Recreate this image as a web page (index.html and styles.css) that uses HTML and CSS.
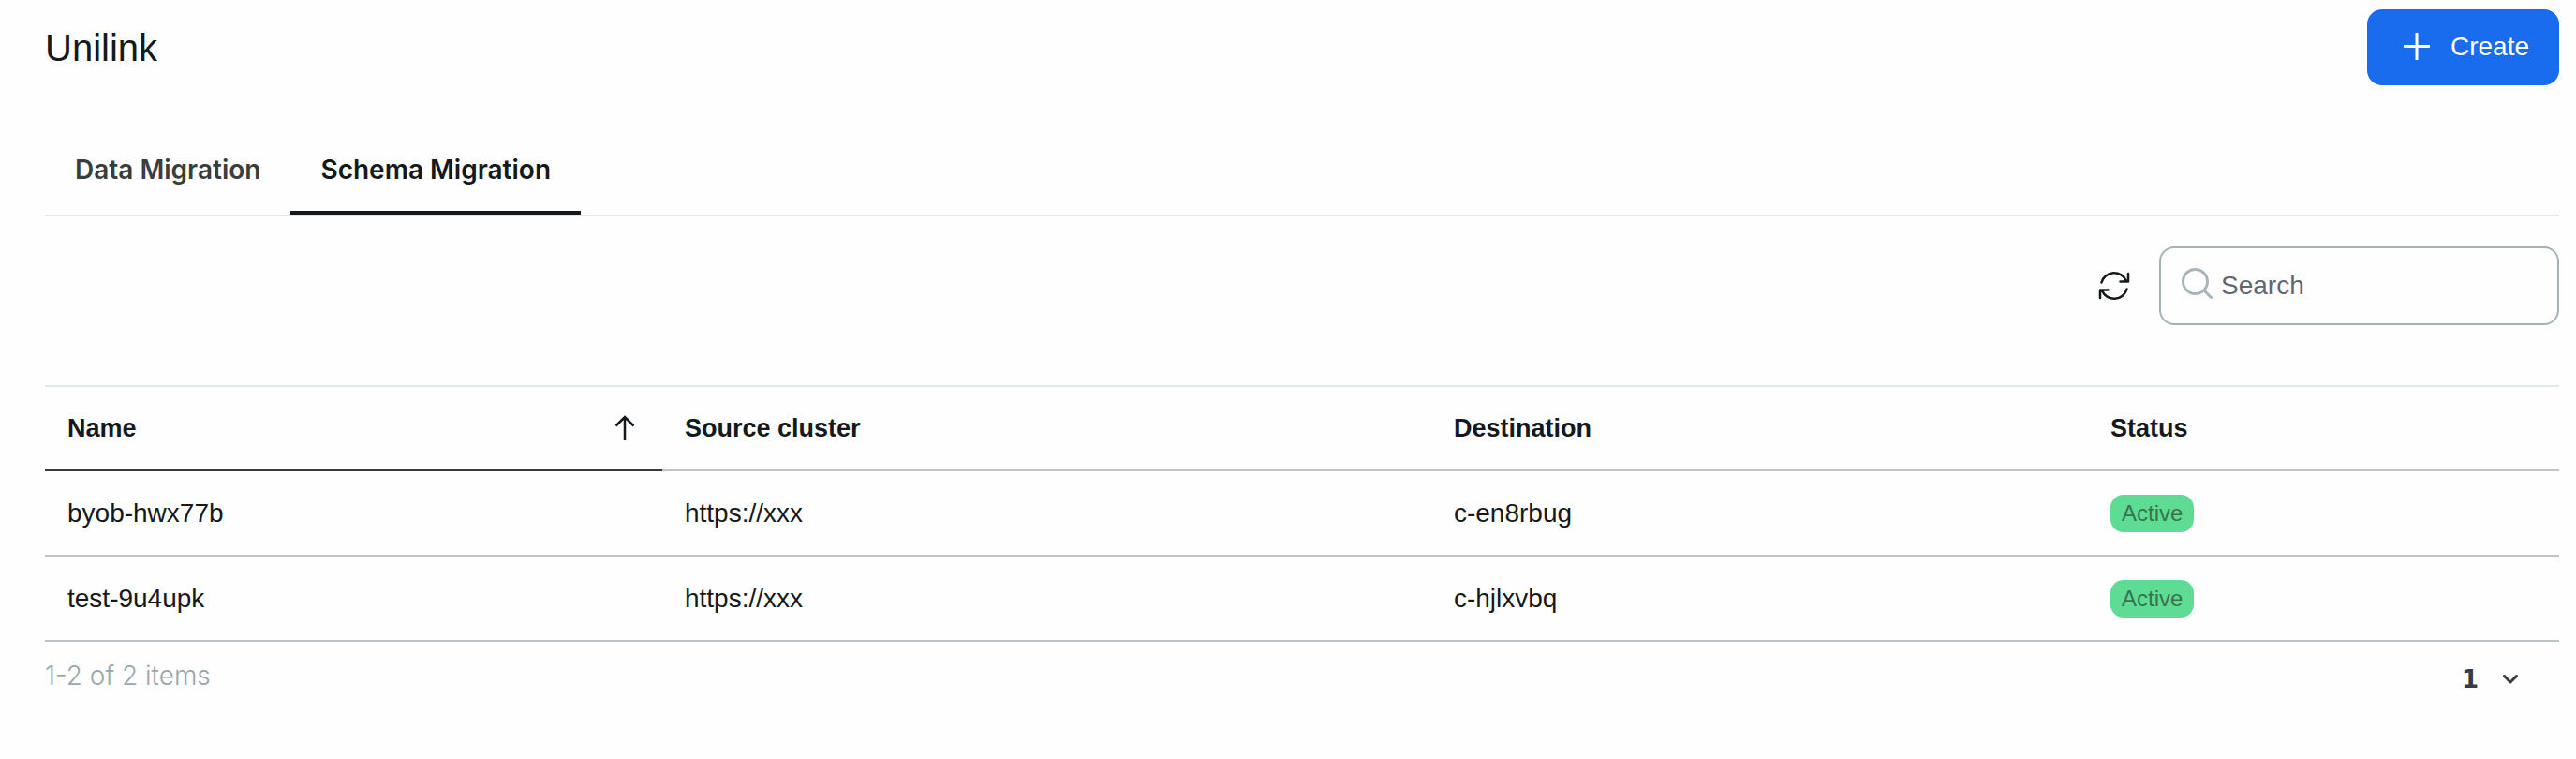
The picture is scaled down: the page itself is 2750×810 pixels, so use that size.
FILE: index.html
```html
<!DOCTYPE html>
<html lang="en">
<head>
<meta charset="utf-8">
<title>Unilink</title>
<link rel="stylesheet" href="styles.css">
</head>
<body>
<main class="page">
  <header class="page-header">
    <h1 class="page-title">Unilink</h1>
    <button class="create-button" type="button">
      <svg class="create-icon" viewBox="0 0 30 30" aria-hidden="true"><path d="M15 0v29M1 14.500h28"/></svg>
      <span>Create</span>
    </button>
  </header>

  <nav class="tabs">
    <a class="tab" href="#data">Data Migration</a>
    <a class="tab tab-active" href="#schema" aria-current="page">Schema Migration</a>
  </nav>

  <div class="toolbar">
    <button class="refresh-button" type="button" aria-label="Refresh">
      <svg class="refresh-icon" viewBox="0 0 34 32" aria-hidden="true"><path d="M3.500 12.500A14 14 0 0 1 30 11M32 3v8.500h-8.500M30.500 19.500A14 14 0 0 1 4 21M2 29v-8.500h8.500"/></svg>
    </button>
    <label class="search">
      <svg class="search-icon" viewBox="0 0 34 34" aria-hidden="true"><circle cx="14.500" cy="14.500" r="13"/><path d="M23.500 23.500l9 9"/></svg>
      <input class="search-input" type="search" placeholder="Search" aria-label="Search">
    </label>
  </div>

  <table class="grid">
    <colgroup><col class="col-name"><col class="col-source"><col class="col-destination"><col></colgroup>
    <thead>
      <tr>
        <th class="sorted" scope="col" aria-sort="ascending">
          <div class="sort-head">
            <span>Name</span>
            <svg class="sort-icon" viewBox="0 0 22 28" aria-hidden="true"><path d="M11 27V2M1.500 11.500L11 2l9.500 9.500"/></svg>
          </div>
        </th>
        <th scope="col">Source cluster</th>
        <th scope="col">Destination</th>
        <th scope="col">Status</th>
      </tr>
    </thead>
    <tbody>
      <tr><td>byob-hwx77b</td><td>https://xxx</td><td>c-en8rbug</td><td><span class="badge">Active</span></td></tr>
      <tr><td>test-9u4upk</td><td>https://xxx</td><td>c-hjlxvbq</td><td><span class="badge">Active</span></td></tr>
    </tbody>
  </table>

  <footer class="pager">
    <span class="pager-count">1-2 of 2 items</span>
    <label class="pager-page">
      <select class="pager-select" aria-label="Page"><option>1</option></select>
      <svg class="pager-icon" viewBox="0 0 16 10" aria-hidden="true"><path d="M1.500 1.500L8 8l6.500-6.500"/></svg>
    </label>
  </footer>
</main>
</body>
</html>
```
FILE: styles.css
```css
* {
  box-sizing: border-box;
}

body {
  margin: 0;
  background: #fefefe;
  color: #16191b;
  font-family: "Liberation Sans", Arial, sans-serif;
  font-size: 28px;
  line-height: 32px;
}

button,
input,
select {
  font: inherit;
}

svg {
  display: block;
  flex: none;
  fill: none;
  stroke: currentColor;
}

.page {
  padding: 10px 18px 40px 48px;
}

.page-header {
  display: flex;
  align-items: center;
  justify-content: space-between;
}

.page-title {
  margin: 0;
  font-size: 40px;
  font-weight: 400;
  line-height: 48px;
}

.create-button {
  display: flex;
  align-items: center;
  gap: 21px;
  padding: 24px 32px 25px 38px;
  border: 0;
  border-radius: 16px;
  background: #196ced;
  color: #fff;
}

.create-icon {
  width: 30px;
  height: 30px;
  stroke-width: 3;
}

.tabs {
  display: flex;
  margin-top: 58px;
  border-bottom: 2px solid #e1e6e9;
  font-family: Inter, sans-serif;
  font-weight: 600;
}

.tab {
  padding: 16px 32px 28px;
  border-bottom: 4px solid transparent;
  color: #3a3d3d;
  text-decoration: none;
}

.tab-active {
  border-bottom-color: #15191b;
  color: #15191b;
}

.toolbar {
  display: flex;
  align-items: center;
  justify-content: flex-end;
  gap: 31px;
  margin-top: 32px;
}

.refresh-button {
  padding: 0;
  border: 0;
  background: none;
  color: #16191b;
}

.refresh-icon {
  width: 34px;
  height: 32px;
  stroke-width: 2.5;
  stroke-linecap: round;
  stroke-linejoin: round;
}

.search {
  display: flex;
  align-items: flex-start;
  gap: 8px;
  width: 427px;
  padding: 21px 22px;
  border: 2px solid #a5b2b6;
  border-radius: 16px;
}

.search-icon {
  width: 34px;
  height: 34px;
  color: #a8b5b8;
  stroke-width: 3;
}

.search-input {
  flex: 1;
  min-width: 0;
  height: 38px;
  padding: 0;
  border: 0;
  outline: 0;
  background: none;
  color: #16191b;
}

.search-input::placeholder {
  color: #5f6773;
  opacity: 1;
}

.grid {
  width: 100%;
  margin-top: 64px;
  border-top: 2px solid #e1e6e9;
  border-spacing: 0;
  table-layout: fixed;
}

.col-name {
  width: 24.55%;
}

.col-source {
  width: 30.59%;
}

.col-destination {
  width: 26.12%;
}

.grid th,
.grid td {
  height: 91px;
  padding: 0 24px;
  border-bottom: 2px solid #bcc6ca;
  text-align: left;
  vertical-align: middle;
}

.grid th {
  height: 90px;
  font-size: 27px;
  font-weight: 700;
}

.grid .sorted {
  border-bottom-color: #343d43;
}

.sort-head {
  display: flex;
  align-items: center;
  justify-content: space-between;
  padding-right: 5px;
}

.sort-icon {
  width: 22px;
  height: 28px;
  stroke-width: 2.5;
}

.badge {
  display: inline-block;
  padding: 4px 12px;
  border-radius: 14px;
  background: #5fdc94;
  color: #347550;
  font-size: 24px;
  vertical-align: middle;
}

.pager {
  display: flex;
  align-items: flex-start;
  justify-content: space-between;
  padding-top: 20px;
}

.pager-count {
  color: #9aa6ad;
  font-family: Inter, sans-serif;
  font-weight: 300;
}

.pager-page {
  display: flex;
  align-items: center;
  gap: 25px;
  padding: 4px 44px 0 0;
  color: #343d43;
}

.pager-select {
  appearance: none;
  padding: 0;
  border: 0;
  background: none;
  color: inherit;
  font-family: "DejaVu Sans", sans-serif;
  font-size: 26px;
  font-weight: 700;
}

.pager-icon {
  width: 16px;
  height: 10px;
  stroke-width: 3;
  stroke-linecap: round;
  stroke-linejoin: round;
}
```
